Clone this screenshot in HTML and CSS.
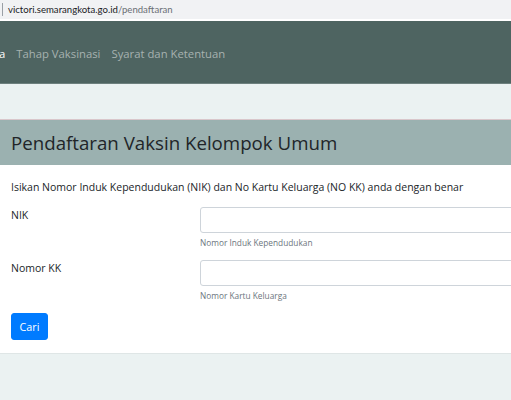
FILE: index.html
```html
<!DOCTYPE html>
<html>
<head>
<meta charset="utf-8">
<link rel="stylesheet" href="styles.css">
</head>
<body>
<div class="urlbar"><span class="caret"></span><span class="host">victori.semarangkota.go.id</span><span class="path">/pendaftaran</span></div>
<nav class="navbar">
  <a class="nav-link active">a</a>
  <a class="nav-link">Tahap Vaksinasi</a>
  <a class="nav-link">Syarat dan Ketentuan</a>
</nav>
<div class="spacer"></div>
<div class="card">
  <div class="card-header"><h3>Pendaftaran Vaksin Kelompok Umum</h3></div>
  <div class="card-body">
    <p class="lead-text">Isikan Nomor Induk Kependudukan (NIK) dan No Kartu Keluarga (NO KK) anda dengan benar</p>
    <div class="form-row">
      <label class="form-label">NIK</label>
      <div class="field">
        <input class="form-control" type="text">
        <small class="help">Nomor Induk Kependudukan</small>
      </div>
    </div>
    <div class="form-row">
      <label class="form-label">Nomor KK</label>
      <div class="field">
        <input class="form-control" type="text">
        <small class="help">Nomor Kartu Keluarga</small>
      </div>
    </div>
    <button class="btn">Cari</button>
  </div>
</div>
</body>
</html>
```
FILE: styles.css
```css
html, body {
  margin: 0;
  padding: 0;
  overflow: hidden;
}
body {
  width: 600px;
  height: 400px;
  background: #ebf2f2;
  font-family: "Open Sans", "Noto Sans", sans-serif;
  color: #212529;
}
.urlbar {
  height: 19px;
  background: #f1f2f4;
  border-bottom: 2px solid #ffffff;
  display: flex;
  align-items: center;
  font-family: Lato, "Open Sans", sans-serif;
  font-size: 9.6px;
  line-height: 19px;
}
.caret {
  width: 1px;
  height: 13px;
  background: #9aa0a6;
  margin: 0 5px 0 2px;
}
.host { color: #202124; }
.path { color: #6b7075; }
.navbar {
  height: 63px;
  background: #4e6461;
  display: flex;
  align-items: center;
  gap: 11px;
  border-bottom: 1px solid #6d807e;
  box-sizing: border-box;
  padding-top: 3px;
}
.nav-link {
  font-size: 11.3px;
  color: #a7b2b0;
}
.nav-link.active {
  color: #ffffff;
  margin-left: -1px;
  margin-right: 0;
}
.spacer {
  height: 35px;
}
.card {
  background: #ffffff;
  border-top: 1px solid #d9c7cb;
  border-bottom: 1px solid #dfe6e6;
}
.card-header {
  background: #9bb1b0;
  height: 45px;
  display: flex;
  align-items: center;
  padding-left: 11px;
}
.card-header h3 {
  margin: 0;
  font-size: 18.7px;
  font-weight: 500;
  color: #212529;
}
.card-body {
  padding: 14px 10px 13px 11px;
}
.lead-text {
  margin: 0 0 11px 0;
  font-size: 10.5px;
  line-height: 17px;
}
.form-row {
  display: grid;
  grid-template-columns: 189px 1fr;
  margin-bottom: 11px;
}
.form-label {
  font-size: 10.5px;
  line-height: 17px;
}
.field {
  display: flex;
  flex-direction: column;
}
.form-control {
  box-sizing: border-box;
  height: 26px;
  width: 100%;
  border: 1px solid #ced4da;
  border-radius: 3px;
  margin: 0;
  padding: 0 8px;
  font: inherit;
}
.help {
  margin-top: 3px;
  font-size: 8.3px;
  line-height: 13px;
  color: #6c757d;
}
.btn {
  margin-top: 9px;
  display: block;
  width: 37px;
  height: 27px;
  background: #007bff;
  border: 1px solid #007bff;
  border-radius: 3px;
  color: #ffffff;
  font-family: inherit;
  font-size: 10.8px;
  padding: 0;
}
```
